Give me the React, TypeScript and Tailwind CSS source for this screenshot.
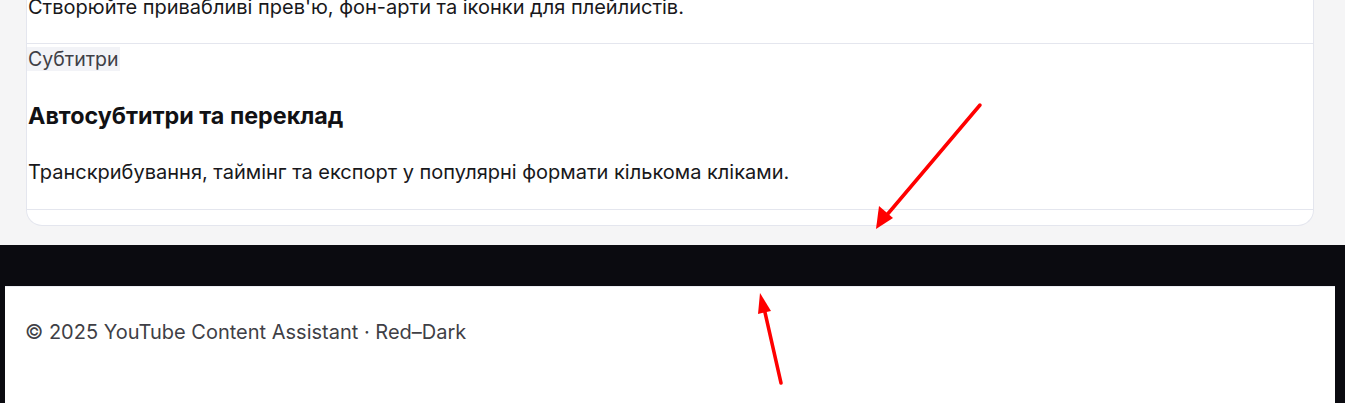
import React from "react";

export default function App() {
  return (
    <div className="relative w-[1350px] h-[403px] overflow-hidden bg-white font-['Inter','Noto_Sans',sans-serif]">
      <div className="w-[1345px] flex flex-col">
        <div className="bg-[#f5f5f6] pl-[26px] pr-[31px] pb-[19px]">
          <div className="bg-white border-x border-b border-[#e4e6ee] rounded-b-2xl">
            <div className="-mt-[7px] pb-[22px] px-px border-b border-[#e4e6ee]">
              <p className="text-[20px] leading-[28px] text-[#18181b]">
                Створюйте привабливі прев'ю, фон-арти та іконки для плейлистів.
              </p>
            </div>
            <div className="pt-[3px] pb-[23px] border-b border-[#e4e6ee]">
              <span className="inline-block bg-[#f2f3f7] px-px text-[19.5px] leading-[24px] text-[#3f3f46]">
                Субтитри
              </span>
              <h3 className="mt-[30px] px-px text-[23.3px] leading-[28px] font-bold text-[#111114]">
                Автосубтитри та переклад
              </h3>
              <p className="mt-[28px] px-px text-[20px] leading-[28px] text-[#18181b]">
                Транскрибування, таймінг та експорт у популярні формати кількома кліками.
              </p>
            </div>
            <div className="h-[15px]" />
          </div>
        </div>
        <div className="h-[41px] bg-[#0b0b10]" />
        <div className="bg-[#0b0b10] pl-[5px] pr-[10px]">
          <footer className="bg-white h-[120px] pt-[31px] px-[20px] border-t border-[#eceef3]">
            <p className="text-[20px] leading-[28px] text-[#3f3f46]">
              © 2025 YouTube Content Assistant · Red–Dark
            </p>
          </footer>
        </div>
      </div>
      <svg className="absolute inset-0 pointer-events-none" width="1350" height="403" viewBox="0 0 1350 403">
        <line x1="980" y1="105" x2="886" y2="216" stroke="#ff0000" strokeWidth="3.5" strokeLinecap="round" />
        <polygon points="876,229 879,206 893,218" fill="#ff0000" />
        <line x1="781" y1="383" x2="764" y2="308" stroke="#ff0000" strokeWidth="3.5" strokeLinecap="round" />
        <polygon points="760,293 758,314 771,311" fill="#ff0000" />
      </svg>
    </div>
  );
}
